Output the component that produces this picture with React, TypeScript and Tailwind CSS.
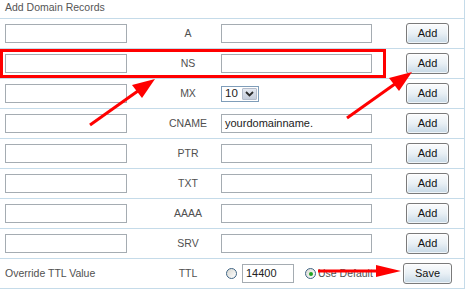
import React from "react";

const LINE = "border-[#c5dbe9]";

function Btn({ label, w }: { label: string; w: string }) {
  return (
    <div
      className={`${w} h-[21px] rounded-[3px] border border-[#7a7a7a] bg-linear-to-b from-[#fbfcfd] via-[#e9f0f5] to-[#c7d9e6] flex items-center justify-center text-[11px] text-[#111] shadow-[inset_0_0_0_1px_rgba(255,255,255,0.7)]`}
    >
      {label}
    </div>
  );
}

function Field({ w, value }: { w: string; value?: string }) {
  return (
    <div
      className={`${w} h-[19px] border border-[#a5acb2] bg-white flex items-center pl-[3px] text-[11px] text-[#222] leading-none`}
    >
      {value}
    </div>
  );
}

function Radio({ checked }: { checked?: boolean }) {
  return (
    <div className="w-[11px] h-[11px] rounded-full border border-[#3f6484] bg-linear-to-br from-[#d8d8d2] to-[#ffffff] flex items-center justify-center">
      {checked && <div className="w-[4px] h-[4px] rounded-full bg-[#22a322]" />}
    </div>
  );
}

function Label({ text }: { text: string }) {
  return (
    <div className="w-[94px] pl-[28px] text-center text-[10.5px] text-[#505050]">{text}</div>
  );
}

export default function App() {
  const rows = ["A", "NS", "MX", "CNAME", "PTR", "TXT", "AAAA", "SRV"];
  return (
    <div className="relative w-[466px] h-[289px] bg-white overflow-hidden font-['Liberation_Sans',Arial,sans-serif]">
      <div className={`w-[465px] h-[289px] border-r ${LINE} flex flex-col`}>
        <div className={`h-[19px] shrink-0 border-b ${LINE} flex items-center pl-[5px] pb-[2px] text-[10.5px] text-[#555]`}>
          Add Domain Records
        </div>
        {rows.map((r) => (
          <div key={r} className={`h-[30px] shrink-0 border-b ${LINE} flex items-center pl-[5px]`}>
            <Field w="w-[122px]" />
            <Label text={r} />
            {r === "MX" ? (
              <div className="w-[151px] flex items-center">
                <div className="w-[38px] h-[16px] border border-[#7f9db9] bg-white flex items-center">
                  <span className="pl-[3px] text-[11.5px] text-[#222] leading-none">10</span>
                  <div className="ml-auto mr-[1px] w-[15px] h-[12px] rounded-[1px] border border-[#b4bccb] bg-linear-to-b from-[#e4e8f0] to-[#c5cddb] flex items-center justify-center">
                    <svg width="9" height="6" viewBox="0 0 9 6">
                      <path d="M1 1 L4.5 4.5 L8 1" stroke="#2b2b2b" strokeWidth="1.8" fill="none" />
                    </svg>
                  </div>
                </div>
              </div>
            ) : (
              <Field w="w-[151px]" value={r === "CNAME" ? "yourdomainname." : undefined} />
            )}
            <div className="ml-[34px]">
              <Btn label="Add" w="w-[43px]" />
            </div>
          </div>
        ))}
        <div className={`h-[30px] shrink-0 border-b ${LINE} flex items-center pl-[5px]`}>
          <div className="w-[122px] text-[10.5px] text-[#505050]">Override TTL Value</div>
          <Label text="TTL" />
          <div className="w-[182px] flex items-center">
            <div className="ml-[5px]">
              <Radio />
            </div>
            <div className="ml-[5px]">
              <Field w="w-[52px]" value="14400" />
            </div>
            <div className="ml-[11px]">
              <Radio checked />
            </div>
            <span className="ml-[2px] text-[10.5px] text-[#505050]">Use Default</span>
          </div>
          <Btn label="Save" w="w-[49px]" />
        </div>
      </div>
      <svg className="absolute inset-0 pointer-events-none" width="466" height="289" viewBox="0 0 466 289">
        <rect x="1.5" y="50.5" width="383" height="26" fill="none" stroke="#ff0000" strokeWidth="3" />
        <line x1="90" y1="125" x2="140" y2="89.5" stroke="#ff0000" strokeWidth="3" />
        <polygon points="155,79 142,98 132,85" fill="#ff0000" />
        <line x1="347" y1="118" x2="397" y2="82.5" stroke="#ff0000" strokeWidth="3" />
        <polygon points="412,72 399,91 389,78" fill="#ff0000" />
        <line x1="318" y1="271" x2="380" y2="271" stroke="#ff0000" strokeWidth="3" />
        <polygon points="401,271 376,265 376,277" fill="#ff0000" />
      </svg>
    </div>
  );
}
